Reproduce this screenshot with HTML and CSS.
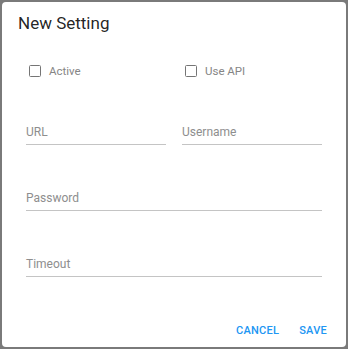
FILE: index.html
```html
<!DOCTYPE html>
<html>
<head>
<meta charset="utf-8">
<link rel="stylesheet" href="styles.css">
</head>
<body>
<div class="dialog">
  <div class="title">New Setting</div>
  <div class="content">
    <div class="row checks">
      <label class="check"><span class="box"></span><span class="check-label">Active</span></label>
      <label class="check"><span class="box"></span><span class="check-label">Use API</span></label>
    </div>
    <div class="row">
      <div class="field"><span class="field-label">URL</span></div>
      <div class="field"><span class="field-label">Username</span></div>
    </div>
    <div class="field full"><span class="field-label">Password</span></div>
    <div class="field full"><span class="field-label">Timeout</span></div>
  </div>
  <div class="actions">
    <button class="btn">Cancel</button>
    <button class="btn">Save</button>
  </div>
</div>
</body>
</html>
```
FILE: styles.css
```css
html, body {
  margin: 0;
  padding: 0;
  height: 100%;
  overflow: hidden;
}
body {
  background: #7a7a7a;
  font-family: Roboto, "Liberation Sans", sans-serif;
  padding: 2px;
  box-sizing: border-box;
}
.dialog {
  width: 344px;
  height: 345px;
  background: #fff;
  border-radius: 4px;
  box-sizing: border-box;
  display: flex;
  flex-direction: column;
}
.title {
  font-size: 17px;
  line-height: 22px;
  color: rgba(0,0,0,0.87);
  padding: 10px 16px 0 16px;
}
.content {
  padding: 0 24px;
  display: flex;
  flex-direction: column;
}
.row {
  display: grid;
  grid-template-columns: 1fr 1fr;
  column-gap: 16px;
}
.checks {
  margin-top: 27px;
  height: 20px;
  align-items: center;
}
.check {
  display: flex;
  align-items: center;
  gap: 8px;
  padding-left: 3px;
}
.box {
  width: 12px;
  height: 12px;
  box-sizing: border-box;
  border: 1.5px solid #757575;
  border-radius: 1.5px;
}
.check-label {
  font-size: 11.5px;
  color: #858585;
}
.row + .row {
  margin-top: 43px;
}
.field {
  border-bottom: 1px solid #c4c4c4;
  padding-bottom: 3px;
}
.field-label {
  display: block;
  font-size: 12px;
  line-height: 17px;
  color: #8e8e8e;
}
.full {
  margin-top: 45px;
}
.actions {
  margin-top: auto;
  display: flex;
  justify-content: flex-end;
  gap: 20px;
  padding: 0 19px 8px 0;
}
.btn {
  border: 0;
  background: none;
  padding: 0;
  font-family: inherit;
  font-size: 11px;
  font-weight: 500;
  letter-spacing: 0.25px;
  text-transform: uppercase;
  color: #2196f3;
  line-height: 16px;
}
```
